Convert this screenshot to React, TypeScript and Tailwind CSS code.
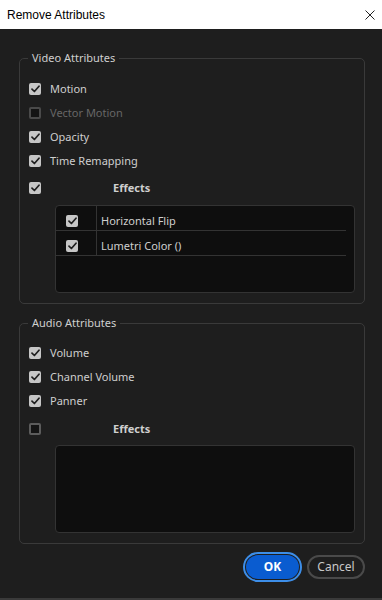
import React from "react";

const font = { fontFamily: '"Noto Sans", "Liberation Sans", Arial, sans-serif' };

function Check({ checked, disabled }: { checked: boolean; disabled?: boolean }) {
  if (!checked) {
    return (
      <span
        className={`block w-[12px] h-[12px] rounded-[2px] border-2 bg-[#141414] ${
          disabled ? "border-[#4a4a4a]" : "border-[#5c5c5c]"
        }`}
      />
    );
  }
  return (
    <span className="flex items-center justify-center w-[12px] h-[12px] rounded-[2px] bg-[#c6c6c6]">
      <svg width="9" height="8" viewBox="0 0 9 8" fill="none">
        <path d="M1 4.2 L3.4 6.5 L8 1.2" stroke="#1e1e1e" strokeWidth="1.7" strokeLinecap="round" strokeLinejoin="round" />
      </svg>
    </span>
  );
}

function Row({ label, checked = true, disabled }: { label: string; checked?: boolean; disabled?: boolean }) {
  return (
    <div className="flex items-center h-[24px] pl-[9px]">
      <Check checked={checked} disabled={disabled} />
      <span className={`ml-[9px] text-[11px] ${disabled ? "text-[#666666]" : "text-[#cfcfcf]"}`}>{label}</span>
    </div>
  );
}

function EffectsHeader({ checked }: { checked: boolean }) {
  return (
    <div className="flex items-center h-[24px] pl-[9px]">
      <Check checked={checked} />
      <span className="ml-[72px] text-[11px] font-bold text-[#cfcfcf]">Effects</span>
    </div>
  );
}

function EffectList({ items }: { items: string[] }) {
  return (
    <div className="ml-[35px] mr-[9px] h-[88px] rounded-[4px] border border-[#333333] bg-[#0e0e0e] pr-[8px]">
      {items.map((it) => (
        <div key={it} className="flex h-[25px] border-b border-[#333333]">
          <div className="w-[41px] flex items-start pl-[10px] pt-[9px] border-r border-[#333333]">
            <Check checked />
          </div>
          <div className="flex items-end pb-[1px] pl-[4px] text-[11px] text-[#cfcfcf]">{it}</div>
        </div>
      ))}
    </div>
  );
}

function Group({ title, children }: { title: string; children: React.ReactNode }) {
  return (
    <fieldset className="border border-[#3a3a3a] rounded-[5px] pb-[10px]">
      <legend className="ml-[8px] px-[4px] text-[11px] leading-[16px] text-[#cfcfcf]">{title}</legend>
      {children}
    </fieldset>
  );
}

export default function App() {
  return (
    <div className="w-[382px] h-[600px] bg-[#1e1e1e] flex flex-col overflow-hidden" style={font}>
      {/* title bar */}
      <div className="h-[29px] bg-white flex items-center justify-between pl-[7px] pr-[7px] shrink-0">
        <span className="text-[12px] text-black" style={{ fontFamily: '"Liberation Sans", Arial, sans-serif' }}>
          Remove Attributes
        </span>
        <svg width="10" height="10" viewBox="0 0 10 10">
          <path d="M0.5 0.5 L9.5 9.5 M9.5 0.5 L0.5 9.5" stroke="#222" strokeWidth="1" />
        </svg>
      </div>

      <div className="flex-1 pt-[21px] pl-[19px] pr-[17px] flex flex-col">
        <Group title="Video Attributes">
          <div className="mt-[11px]">
            <Row label="Motion" />
            <Row label="Vector Motion" checked={false} disabled />
            <Row label="Opacity" />
            <Row label="Time Remapping" />
            <div className="mt-[3px]">
              <EffectsHeader checked />
            </div>
            <div className="mt-[5px]">
              <EffectList items={["Horizontal Flip", "Lumetri Color ()"]} />
            </div>
          </div>
        </Group>

        <div className="mt-[11px]">
          <Group title="Audio Attributes">
            <div className="mt-[10px]">
              <Row label="Volume" />
              <Row label="Channel Volume" />
              <Row label="Panner" />
              <div className="mt-[4px]">
                <EffectsHeader checked={false} />
              </div>
              <div className="mt-[4px]">
                <EffectList items={[]} />
              </div>
            </div>
          </Group>
        </div>

        <div className="mt-[8px] flex justify-end items-center gap-[5px]">
          <button className="w-[59px] h-[30px] rounded-full border-2 border-[#3d8ee8] p-[1px]">
            <span className="flex w-full h-full rounded-full bg-[#0a5cd0] items-center justify-center text-[12px] font-bold text-white">
              OK
            </span>
          </button>
          <button className="w-[58px] h-[24px] rounded-full border-2 border-[#4a4a4a] text-[12px] text-[#c8c8c8] flex items-center justify-center">
            Cancel
          </button>
        </div>
      </div>
      <div className="h-[2px] bg-[#3a3a3a] shrink-0" />
    </div>
  );
}
